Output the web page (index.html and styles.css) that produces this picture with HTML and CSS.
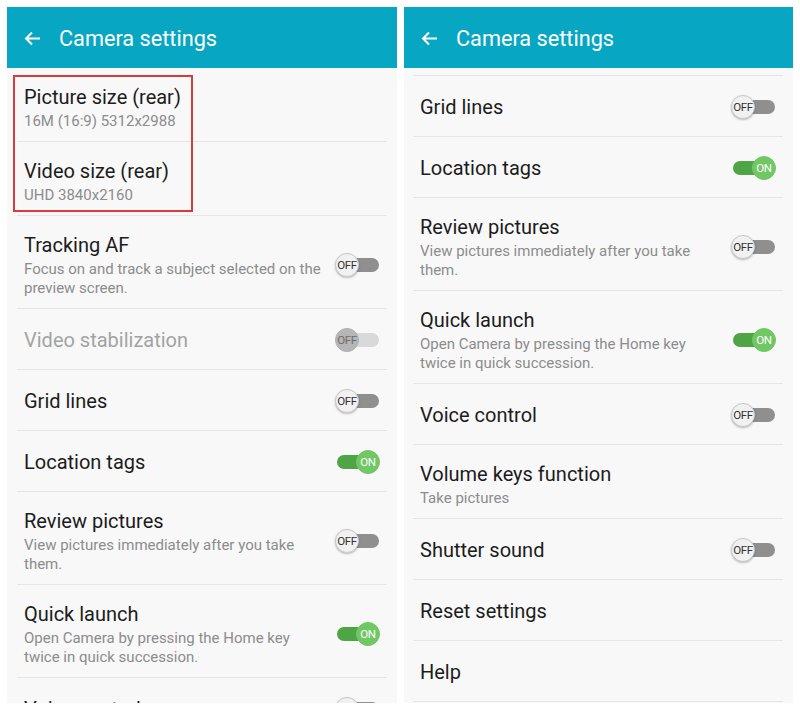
FILE: index.html
```html
<!DOCTYPE html>
<html lang="en">
<head>
  <meta charset="UTF-8" />
  <meta name="viewport" content="width=device-width, initial-scale=1.0"/>
  <title>Camera settings</title>
  <link rel="stylesheet" href="styles.css">
</head>
<body>

  <div class="screens">

    <!-- left screen: top of the list -->
    <div class="panel">
      <div class="appbar">
        <svg class="back" width="17" height="15" viewBox="0 0 17 15">
          <path d="M16 7.5H2M8 1.5L2 7.5l6 6" fill="none" stroke="#fff" stroke-width="2"/>
        </svg>
        <span class="appbar-title">Camera settings</span>
      </div>

      <div class="list">
        <div class="marked">
          <div class="item">
            <div class="text">
              <div class="title">Picture size (rear)</div>
              <div class="sub">16M (16:9) 5312x2988</div>
            </div>
          </div>
          <div class="item">
            <div class="text">
              <div class="title">Video size (rear)</div>
              <div class="sub">UHD 3840x2160</div>
            </div>
          </div>
        </div>

        <div class="item">
          <div class="text">
            <div class="title">Tracking AF</div>
            <div class="sub">Focus on and track a subject selected on the preview screen.</div>
          </div>
          <div class="switch"><div class="track"></div><div class="thumb">OFF</div></div>
        </div>

        <div class="item disabled">
          <div class="text">
            <div class="title">Video stabilization</div>
          </div>
          <div class="switch"><div class="track"></div><div class="thumb">OFF</div></div>
        </div>

        <div class="item">
          <div class="text"><div class="title">Grid lines</div></div>
          <div class="switch"><div class="track"></div><div class="thumb">OFF</div></div>
        </div>

        <div class="item">
          <div class="text"><div class="title">Location tags</div></div>
          <div class="switch on"><div class="track"></div><div class="thumb">ON</div></div>
        </div>

        <div class="item">
          <div class="text">
            <div class="title">Review pictures</div>
            <div class="sub">View pictures immediately after you take them.</div>
          </div>
          <div class="switch"><div class="track"></div><div class="thumb">OFF</div></div>
        </div>

        <div class="item">
          <div class="text">
            <div class="title">Quick launch</div>
            <div class="sub">Open Camera by pressing the Home key twice in quick succession.</div>
          </div>
          <div class="switch on"><div class="track"></div><div class="thumb">ON</div></div>
        </div>

        <div class="item">
          <div class="text"><div class="title">Voice control</div></div>
          <div class="switch"><div class="track"></div><div class="thumb">OFF</div></div>
        </div>
      </div>
    </div>

    <!-- right screen: scrolled down -->
    <div class="panel">
      <div class="appbar">
        <svg class="back" width="17" height="15" viewBox="0 0 17 15">
          <path d="M16 7.5H2M8 1.5L2 7.5l6 6" fill="none" stroke="#fff" stroke-width="2"/>
        </svg>
        <span class="appbar-title">Camera settings</span>
      </div>

      <div class="list scrolled">
        <div class="item">
          <div class="text"><div class="title">Grid lines</div></div>
          <div class="switch"><div class="track"></div><div class="thumb">OFF</div></div>
        </div>

        <div class="item">
          <div class="text"><div class="title">Location tags</div></div>
          <div class="switch on"><div class="track"></div><div class="thumb">ON</div></div>
        </div>

        <div class="item">
          <div class="text">
            <div class="title">Review pictures</div>
            <div class="sub">View pictures immediately after you take them.</div>
          </div>
          <div class="switch"><div class="track"></div><div class="thumb">OFF</div></div>
        </div>

        <div class="item">
          <div class="text">
            <div class="title">Quick launch</div>
            <div class="sub">Open Camera by pressing the Home key twice in quick succession.</div>
          </div>
          <div class="switch on"><div class="track"></div><div class="thumb">ON</div></div>
        </div>

        <div class="item">
          <div class="text"><div class="title">Voice control</div></div>
          <div class="switch"><div class="track"></div><div class="thumb">OFF</div></div>
        </div>

        <div class="item">
          <div class="text">
            <div class="title">Volume keys function</div>
            <div class="sub">Take pictures</div>
          </div>
        </div>

        <div class="item">
          <div class="text"><div class="title">Shutter sound</div></div>
          <div class="switch"><div class="track"></div><div class="thumb">OFF</div></div>
        </div>

        <div class="item">
          <div class="text"><div class="title">Reset settings</div></div>
        </div>

        <div class="item">
          <div class="text"><div class="title">Help</div></div>
        </div>
      </div>
    </div>

  </div>

</body>
</html>
```

FILE: styles.css
```css
body {
  margin: 0;
  background: #fff;
  font-family: Roboto, "Noto Sans", sans-serif;
}

.screens {
  display: flex;
  gap: 7px;
  padding: 7px;
  height: 710px;
  box-sizing: border-box;
}

.panel {
  width: 390px;
  height: 696px;
  background: #f8f8f8;
  overflow: hidden;
  flex-shrink: 0;
}

.panel + .panel {
  width: 389px;
}

.appbar {
  height: 61px;
  background: #07a6c3;
  display: flex;
  align-items: center;
  padding-left: 17px;
  gap: 18px;
}

.back {
  margin-top: 1px;
}

.appbar-title {
  color: #fff;
  font-size: 21.7px;
  margin-top: 2px;
}

.list {
  padding: 0 10px;
}

.list.scrolled {
  padding: 7px 10px 0 9px;
}

.list.scrolled .item:first-child {
  border-top: 1px solid #e6e6e6;
}

.marked {
  position: relative;
}

.marked::after {
  content: "";
  position: absolute;
  left: -4px;
  top: 7px;
  width: 176px;
  height: 133px;
  border: 2px solid #d73b3b;
}

.item {
  display: flex;
  align-items: center;
  justify-content: space-between;
  padding: 18px 8px 16px 7px;
  border-bottom: 1px solid #e6e6e6;
}

.item:has(.sub) {
  padding: 16px 8px 10px 7px;
}

.text {
  width: 301px;
}

.title {
  font-size: 20px;
  line-height: 26px;
  color: #1c1c1c;
}

.sub {
  font-size: 15px;
  line-height: 19px;
  margin-top: 2px;
  color: #8c8c8c;
}

.disabled .title {
  color: #a3a3a3;
}

/* on/off switch */
.switch {
  position: relative;
  width: 44px;
  height: 24px;
  flex-shrink: 0;
}

.track {
  position: absolute;
  left: 2px;
  top: 5px;
  width: 42px;
  height: 14px;
  border-radius: 7px;
  background: #8f8f8f;
}

.thumb {
  position: absolute;
  left: 0;
  top: 0;
  width: 22px;
  height: 22px;
  border-radius: 50%;
  background: #f1f1f1;
  border: 1px solid #c8c8c8;
  box-shadow: 0 1px 2px rgba(0, 0, 0, 0.25);
  font-size: 11.5px;
  line-height: 22px;
  text-align: center;
  color: #333;
  letter-spacing: -0.4px;
}

.switch.on .track {
  background: #4fa446;
}

.switch.on .thumb {
  left: auto;
  right: -1px;
  background: #72c765;
  border-color: #72c765;
  color: #fff;
  box-shadow: none;
}

.disabled .track {
  background: #d9d9d9;
}

.disabled .thumb {
  background: #b6b6b6;
  border-color: #b0b0b0;
  color: #6d6d6d;
  box-shadow: none;
}
```
